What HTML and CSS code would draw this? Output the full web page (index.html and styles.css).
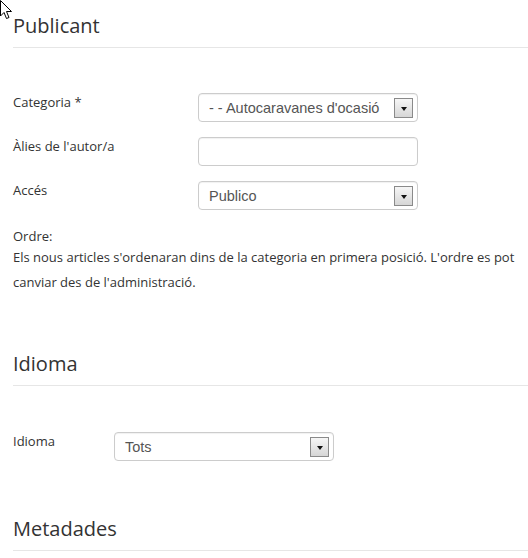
FILE: index.html
```html
<!DOCTYPE html>
<html lang="ca">
<head>
  <meta charset="UTF-8" />
  <title>Publicant</title>
  <link rel="stylesheet" href="styles.css">
</head>
<body>

  <!-- mouse pointer left on the page -->
  <svg class="cursor" width="13" height="20" viewBox="0 0 13 20">
    <path d="M0.5 0.5 L0.5 16 L4 12.5 L6.5 18.5 L9 17.5 L6.5 11.5 L11.5 11.5 Z" fill="#fff" stroke="#000" stroke-width="1" stroke-linejoin="miter"/>
  </svg>

  <!-- Publicant -->
  <div class="section">
    <h2 class="section-title">Publicant</h2>

    <div class="rows">
      <div class="row">
        <label class="row-label">Categoria *</label>
        <div class="fake-select">
          <span class="fake-select-text">- - Autocaravanes d'ocasió</span>
          <span class="fake-select-btn"></span>
        </div>
      </div>

      <div class="row">
        <label class="row-label">Àlies de l'autor/a</label>
        <input type="text" class="text-input">
      </div>

      <div class="row">
        <label class="row-label">Accés</label>
        <div class="fake-select">
          <span class="fake-select-text">Publico</span>
          <span class="fake-select-btn"></span>
        </div>
      </div>
    </div>

    <div class="order">
      <div class="order-label">Ordre:</div>
      <p class="order-text">Els nous articles s'ordenaran dins de la categoria en primera posició. L'ordre es pot canviar des de l'administració.</p>
    </div>
  </div>

  <!-- Idioma -->
  <div class="section section-lang">
    <h2 class="section-title">Idioma</h2>

    <div class="rows rows-lang">
      <div class="row">
        <label class="row-label">Idioma</label>
        <div class="fake-select">
          <span class="fake-select-text">Tots</span>
          <span class="fake-select-btn"></span>
        </div>
      </div>
    </div>
  </div>

  <!-- Metadades -->
  <div class="section section-meta">
    <h2 class="section-title">Metadades</h2>
  </div>

</body>
</html>
```

FILE: styles.css
```css
* { margin: 0; padding: 0; box-sizing: border-box; }
body {
  font-family: 'Open Sans', sans-serif;
  font-size: 13px;
  line-height: 18px;
  color: #333;
  background: #fff;
  padding: 13px 0 0 13px;
  position: relative;
}
.cursor {
  position: absolute;
  top: 0;
  left: 0;
}

.section-title {
  font-size: 20px;
  font-weight: 400;
  line-height: 26px;
  color: #333;
  padding-bottom: 8px;
  border-bottom: 1px solid #e6e6e6;
}

.rows {
  display: flex;
  flex-direction: column;
  gap: 15px;
  margin-top: 45px;
}
.row {
  display: flex;
  align-items: flex-start;
}
.row-label {
  width: 185px;
  flex-shrink: 0;
}

.fake-select, .text-input {
  width: 220px;
  height: 29px;
  border: 1px solid #cccccc;
  border-radius: 4px;
  background: #fff;
  box-shadow: inset 0 1px 1px rgba(0, 0, 0, 0.06);
}
.fake-select {
  display: flex;
  align-items: center;
  justify-content: space-between;
  padding: 0 4px 0 10px;
  font-family: 'Liberation Sans', Arial, sans-serif;
  font-size: 14.5px;
  color: #555;
}
.fake-select-btn {
  width: 19px;
  height: 20px;
  border: 1px solid #8a8a8a;
  background: linear-gradient(to bottom, #f6f6f6, #d6d6d6);
  position: relative;
}
.fake-select-btn::after {
  content: "";
  position: absolute;
  left: 6px;
  top: 8px;
  border-left: 3px solid transparent;
  border-right: 3px solid transparent;
  border-top: 4px solid #111;
}

.order {
  margin-top: 17px;
  padding-right: 10px;
}
.order-text {
  line-height: 25px;
}

.section-lang {
  margin-top: 56px;
}
.rows-lang {
  margin-top: 46px;
}
.rows-lang .row-label {
  width: 101px;
}
.section-meta {
  margin-top: 55px;
}
```
